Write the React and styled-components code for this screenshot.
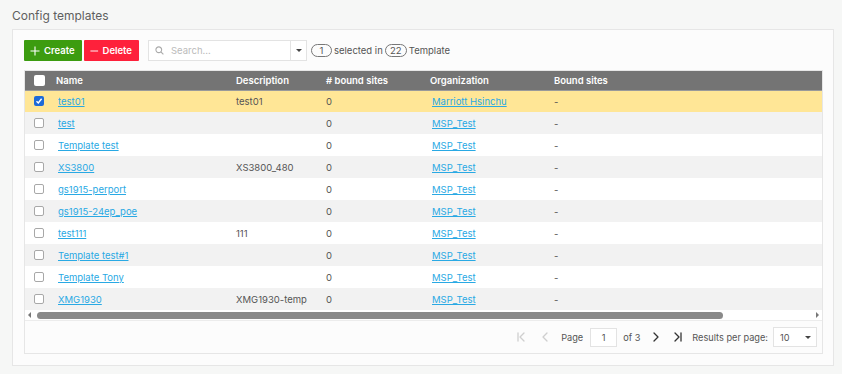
import React from "react";
import styled, { createGlobalStyle } from "styled-components";

const Global = createGlobalStyle`
  html, body { margin: 0; padding: 0; background: #f6f7f6; }
  body { font-family: Inter, "Noto Sans", Arial, sans-serif; color: #555; }
  * { box-sizing: border-box; }
`;

const Page = styled.div`
  width: 842px;
  height: 374px;
  padding: 0 8px 0 12px;
`;

const Title = styled.div`
  height: 29px;
  padding-top: 8px;
  font-size: 12px;
  color: #5f5f5f;
`;

const Card = styled.div`
  width: 822px;
  background: #fcfcfc;
  border: 1px solid #e6e6e6;
  padding: 10px 10px 11px 11px;
`;

const Toolbar = styled.div`
  display: flex;
  align-items: center;
  height: 21px;
  margin-bottom: 9px;
`;

const Btn = styled.button`
  display: flex;
  align-items: center;
  gap: 4px;
  height: 21px;
  padding: 0 7px 0 6px;
  margin-right: 2px;
  border: none;
  border-radius: 1px;
  background: ${(p) => (p.$danger ? "#fe213b" : "#3c9c10")};
  color: #fff;
  font-family: inherit;
  font-weight: 600;
  font-size: 9.5px;
  width: ${(p) => p.$w}px;
`;

const Search = styled.div`
  display: flex;
  height: 21px;
  margin-left: 7px;
  border: 1px solid #e3e3e3;
  background: #fff;
  width: 159px;
`;

const SearchField = styled.div`
  flex: 1;
  display: flex;
  align-items: center;
  gap: 7px;
  padding-left: 6px;
  font-size: 9.5px;
  color: #bbb;
`;

const SearchDrop = styled.div`
  width: 16px;
  border-left: 1px solid #e3e3e3;
  display: flex;
  align-items: center;
  justify-content: center;
`;

const Caret = styled.span`
  width: 0;
  height: 0;
  border-left: 3px solid transparent;
  border-right: 3px solid transparent;
  border-top: 3.5px solid #444;
`;

const Count = styled.div`
  display: flex;
  align-items: center;
  gap: 2px;
  margin-left: 4px;
  font-size: 9.5px;
  color: #555;
`;

const Pill = styled.span`
  display: inline-flex;
  align-items: center;
  justify-content: center;
  height: 13px;
  min-width: ${(p) => p.$w}px;
  border: 1px solid #777;
  border-radius: 7px;
  font-size: 9.5px;
  color: #555;
`;

const Box = styled.div`
  width: 799px;
  border: 1px solid #e6e6e6;
  background: #fff;
`;

const Table = styled.table`
  width: 100%;
  border-collapse: collapse;
  table-layout: fixed;
  font-size: 9.5px;
`;

const Th = styled.th`
  height: 19px;
  background: #747474;
  color: #fff;
  font-weight: 600;
  text-align: left;
  padding: 0;
  border-bottom: 1px solid #9a9a9a;
`;

const Tr = styled.tr`
  height: 22px;
  background: ${(p) => (p.$sel ? "#ffe696" : p.$alt ? "#f2f2f2" : "#fff")};
`;

const Td = styled.td`
  padding: 0;
  color: #555;
  white-space: nowrap;
`;

const CheckCell = styled.div`
  display: flex;
  padding-left: 9px;
`;

const Check = styled.span`
  display: flex;
  align-items: center;
  justify-content: center;
  width: ${(p) => (p.$head ? 11 : 10)}px;
  height: ${(p) => (p.$head ? 11 : 10)}px;
  border-radius: 2px;
  border: ${(p) => (p.$head ? "none" : p.$on ? "none" : "1.2px solid #a8a8a8")};
  background: ${(p) => (p.$on ? "#1e6ad8" : "#fff")};
`;

const Link = styled.a`
  color: #29a9e4;
  text-decoration: underline;
  text-underline-offset: 1px;
  padding-left: 2px;
`;

const ScrollBar = styled.div`
  display: flex;
  align-items: center;
  height: 11px;
  padding: 0 3px 0 3px;
  border-bottom: 1px solid #ececec;
  background: #fff;
`;

const Arrow = styled.span`
  width: 0;
  height: 0;
  border-top: 3px solid transparent;
  border-bottom: 3px solid transparent;
  ${(p) => (p.$right ? "border-left: 3px solid #777;" : "border-right: 3px solid #777;")}
`;

const Track = styled.div`
  flex: 1;
  margin: 0 4px 0 6px;
  height: 7px;
  display: flex;
`;

const Thumb = styled.div`
  height: 7px;
  border-radius: 4px;
  background: #8a8a8a;
`;

const Pager = styled.div`
  display: flex;
  align-items: center;
  justify-content: flex-end;
  height: 32px;
  padding-right: 5px;
  background: #fcfcfc;
  font-size: 9.2px;
  color: #555;
`;

const IconBtn = styled.span`
  display: flex;
  align-items: center;
  margin-left: ${(p) => p.$ml || 0}px;
  margin-right: ${(p) => p.$mr || 0}px;
`;

const PageInput = styled.div`
  width: 27px;
  height: 19px;
  border: 1px solid #e3e3e3;
  background: #fff;
  display: flex;
  align-items: center;
  justify-content: center;
  margin: 0 6px 0 7px;
`;

const Select = styled.div`
  width: 44px;
  height: 20px;
  border: 1px solid #e3e3e3;
  background: #fff;
  display: flex;
  align-items: center;
  justify-content: space-between;
  padding: 0 5px 0 6px;
  margin-left: 5px;
`;

const rows = [
  { n: "test01", d: "test01", o: "Marriott Hsinchu", sel: true },
  { n: "test", d: "", o: "MSP_Test" },
  { n: "Template test", d: "", o: "MSP_Test" },
  { n: "XS3800", d: "XS3800_480", o: "MSP_Test" },
  { n: "gs1915-perport", d: "", o: "MSP_Test" },
  { n: "gs1915-24ep_poe", d: "", o: "MSP_Test" },
  { n: "test111", d: "111", o: "MSP_Test" },
  { n: "Template test#1", d: "", o: "MSP_Test" },
  { n: "Template Tony", d: "", o: "MSP_Test" },
  { n: "XMG1930", d: "XMG1930-temp", o: "MSP_Test" },
];

const Chevron = ({ dir, bar, color }) => (
  <svg width="10" height="12" viewBox="0 0 10 12" fill="none" stroke={color} strokeWidth="1.3" strokeLinecap="round" strokeLinejoin="round">
    {dir === "left" ? <path d="M7 2 L3 6 L7 10" /> : <path d="M3 2 L7 6 L3 10" />}
    {bar && dir === "left" && <path d="M1 2 V10" />}
    {bar && dir === "right" && <path d="M9 2 V10" />}
  </svg>
);

export default function App() {
  return (
    <Page>
      <Global />
      <Title>Config templates</Title>
      <Card>
        <Toolbar>
          <Btn $w={58}>
            <svg width="10" height="10" viewBox="0 0 10 10" stroke="#fff" strokeWidth="1.1"><path d="M5 0.5 V9.5 M0.5 5 H9.5" /></svg>
            Create
          </Btn>
          <Btn $danger $w={55}>
            <svg width="10" height="10" viewBox="0 0 10 10" stroke="#fff" strokeWidth="1.1"><path d="M0.5 5 H9.5" /></svg>
            Delete
          </Btn>
          <Search>
            <SearchField>
              <svg width="9" height="9" viewBox="0 0 10 10" fill="none" stroke="#aaa" strokeWidth="1.2"><circle cx="4.2" cy="4.2" r="3.2" /><path d="M6.6 6.6 L9.3 9.3" /></svg>
              Search...
            </SearchField>
            <SearchDrop><Caret /></SearchDrop>
          </Search>
          <Count>
            <Pill $w={21}>1</Pill>selected in<Pill $w={22}>22</Pill>Template
          </Count>
        </Toolbar>
        <Box>
          <Table>
            <colgroup>
              <col style={{ width: 31 }} />
              <col style={{ width: 180 }} />
              <col style={{ width: 90 }} />
              <col style={{ width: 104 }} />
              <col style={{ width: 124 }} />
              <col />
            </colgroup>
            <thead>
              <tr>
                <Th><CheckCell><Check $head /></CheckCell></Th>
                <Th>Name</Th>
                <Th>Description</Th>
                <Th># bound sites</Th>
                <Th>Organization</Th>
                <Th>Bound sites</Th>
              </tr>
            </thead>
            <tbody>
              {rows.map((r, i) => (
                <Tr key={r.n} $sel={r.sel} $alt={i % 2 === 1}>
                  <Td>
                    <CheckCell>
                      <Check $on={r.sel}>
                        {r.sel && (
                          <svg width="8" height="8" viewBox="0 0 8 8" fill="none" stroke="#fff" strokeWidth="1.4"><path d="M1.5 4.2 L3.3 6 L6.6 1.8" /></svg>
                        )}
                      </Check>
                    </CheckCell>
                  </Td>
                  <Td><Link>{r.n}</Link></Td>
                  <Td>{r.d}</Td>
                  <Td>0</Td>
                  <Td><Link>{r.o}</Link></Td>
                  <Td>-</Td>
                </Tr>
              ))}
            </tbody>
          </Table>
          <ScrollBar>
            <Arrow />
            <Track><Thumb style={{ width: 686 }} /></Track>
            <Arrow $right />
          </ScrollBar>
          <Pager>
            <IconBtn $mr={13}><Chevron dir="left" bar color="#cfcfcf" /></IconBtn>
            <IconBtn $mr={11}><Chevron dir="left" color="#cfcfcf" /></IconBtn>
            Page
            <PageInput>1</PageInput>
            of 3
            <IconBtn $ml={11} $mr={11}><Chevron dir="right" color="#333" /></IconBtn>
            <IconBtn $mr={10}><Chevron dir="right" bar color="#333" /></IconBtn>
            Results per page:
            <Select>10<Caret /></Select>
          </Pager>
        </Box>
      </Card>
    </Page>
  );
}
